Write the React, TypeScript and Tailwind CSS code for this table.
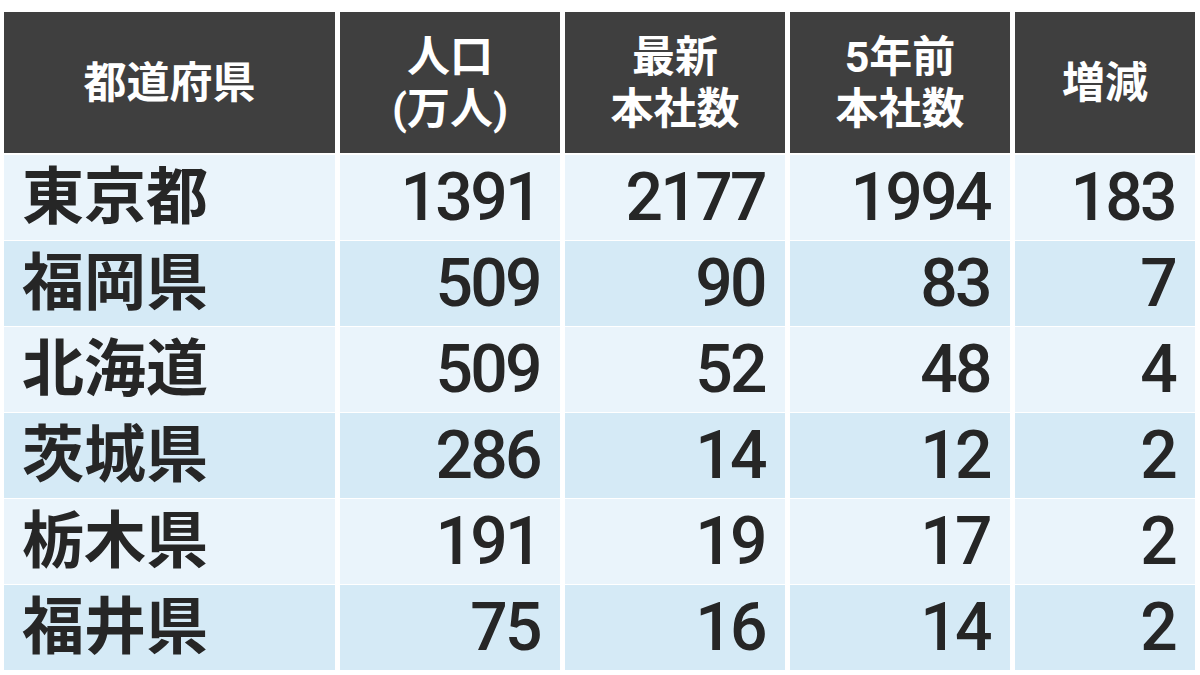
const rows = [
  { pref: "東京都", pop: "1391", latest: "2177", before: "1994", diff: "183" },
  { pref: "福岡県", pop: "509", latest: "90", before: "83", diff: "7" },
  { pref: "北海道", pop: "509", latest: "52", before: "48", diff: "4" },
  { pref: "茨城県", pop: "286", latest: "14", before: "12", diff: "2" },
  { pref: "栃木県", pop: "191", latest: "19", before: "17", diff: "2" },
  { pref: "福井県", pop: "75", latest: "16", before: "14", diff: "2" },
];

const headers = [["都道府県"], ["人口", "(万人)"], ["最新", "本社数"], ["5年前", "本社数"], ["増減"]];

const jp = "font-['Roboto','Noto_Sans_CJK_JP',sans-serif]";

export default function App() {
  return (
    <div className={`h-[675px] w-[1200px] bg-white pl-[4px] pt-[12px] ${jp}`}>
      <div className="grid w-[1191px] grid-cols-[331px_220px_220px_220px_180px] gap-x-[5px] gap-y-[1px]">
        {headers.map((lines, i) => (
          <div
            key={i}
            className="mb-[1px] flex h-[141px] flex-col items-center justify-center bg-[#3f3f3f] text-[43px] font-bold leading-[52px] text-white"
          >
            {lines.map((l) => (
              <span key={l}>{l}</span>
            ))}
          </div>
        ))}
        {rows.map((r, i) => {
          const bg = i % 2 === 0 ? "bg-[#eaf4fb]" : "bg-[#d5eaf6]";
          const num = `${bg} flex h-[85px] items-center justify-end pr-[20px] text-[66px] tracking-[-0.04em] font-medium text-[#262626]`;
          return [
            <div key={`p${i}`} className={`${bg} flex h-[85px] items-center pl-[18px] text-[62px] font-bold text-[#262626]`}>
              {r.pref}
            </div>,
            <div key={`a${i}`} className={num}>{r.pop}</div>,
            <div key={`b${i}`} className={num}>{r.latest}</div>,
            <div key={`c${i}`} className={num}>{r.before}</div>,
            <div key={`d${i}`} className={num}>{r.diff}</div>,
          ];
        })}
      </div>
    </div>
  );
}
